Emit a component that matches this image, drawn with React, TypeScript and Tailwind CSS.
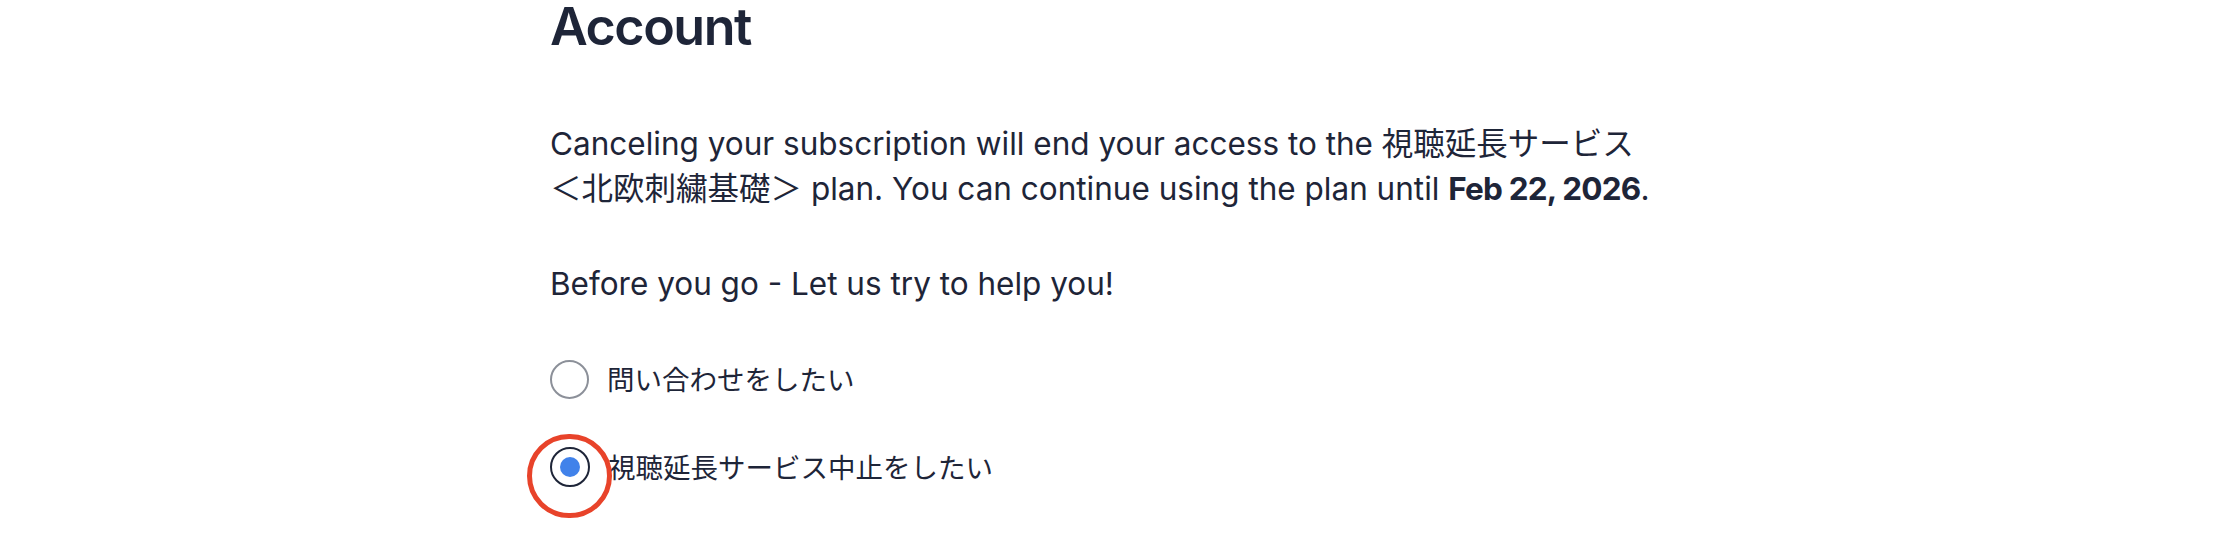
import { useState } from "react";

const options = [
  { id: "contact", label: "問い合わせをしたい" },
  { id: "cancel", label: "視聴延長サービス中止をしたい" },
];

function Radio({ checked }: { checked: boolean }) {
  if (!checked) {
    return <span className="block h-[39px] w-[39px] shrink-0 rounded-full border-2 border-[#8c9099] bg-white" />;
  }
  return (
    <span className="relative flex h-[40px] w-[40px] shrink-0 items-center justify-center rounded-full border-2 border-[#1e2538] bg-white">
      <span className="block h-[20px] w-[20px] rounded-full bg-[#4182ea]" />
      {/* annotation ring */}
      <span className="pointer-events-none absolute left-[-25px] top-[-15px] h-[84px] w-[85px] rounded-full border-[5px] border-[#e8432a]" />
    </span>
  );
}

export default function App() {
  const [selected, setSelected] = useState("cancel");

  return (
    <div className="min-h-[534px] bg-white font-['Inter','Noto_Sans_CJK_JP',sans-serif] text-[#1e2538]">
      <div className="mx-auto w-[1126px] pt-px">
        <h1 className="text-[52px] font-semibold leading-none tracking-[-1.5px]">Account</h1>

        <p className="mt-[68px] text-[31.5px] leading-[45px]">
          Canceling your subscription will end your access to the 視聴延長サービス
          <span className="whitespace-nowrap">＜北欧刺繍基礎＞</span> plan. You can continue using the plan until{" "}
          <span className="font-bold tracking-[-0.8px]">Feb 22, 2026</span>.
        </p>

        <p className="mt-[50px] text-[31.5px] leading-[45px]">Before you go - Let us try to help you!</p>

        <div className="mt-[53px] flex flex-col gap-[48px]">
          {options.map((o) => (
            <label
              key={o.id}
              className="flex h-[40px] cursor-pointer items-center gap-[18px]"
              onClick={() => setSelected(o.id)}
            >
              <Radio checked={selected === o.id} />
              <span className="font-['Noto_Sans_CJK_JP',sans-serif] text-[27.5px] leading-none">{o.label}</span>
            </label>
          ))}
        </div>
      </div>
    </div>
  );
}
